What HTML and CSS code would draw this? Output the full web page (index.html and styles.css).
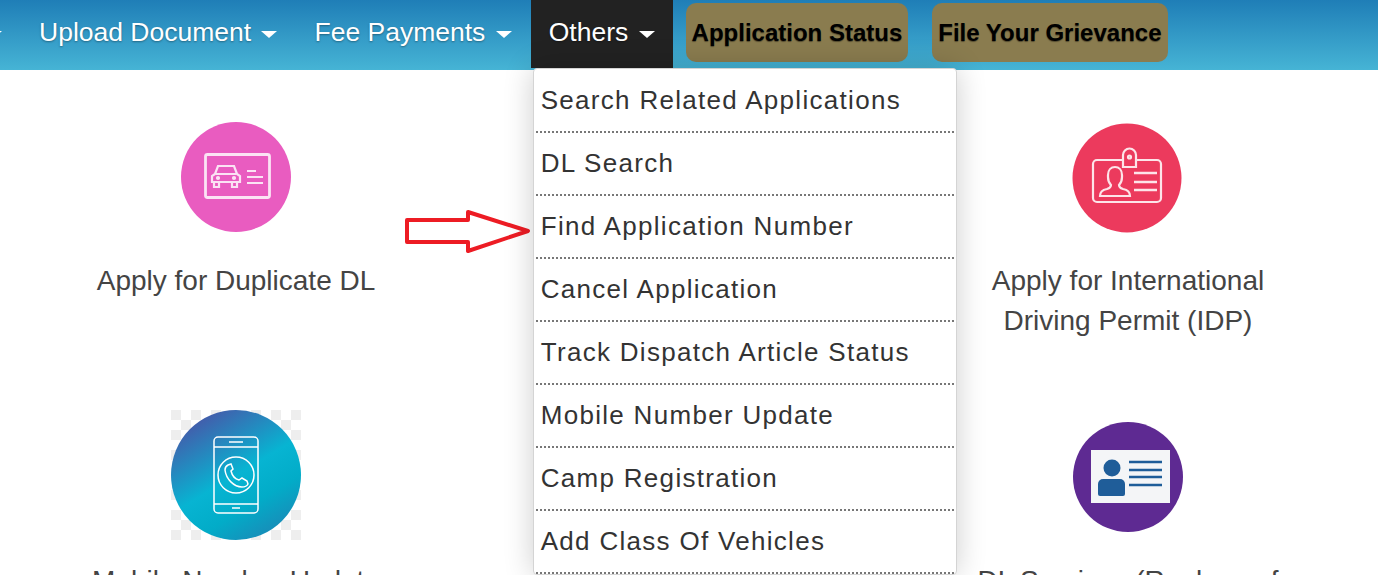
FILE: index.html
```html
<!DOCTYPE html>
<html lang="en">
<head>
    <meta charset="UTF-8">
    <meta name="viewport" content="width=device-width, initial-scale=1.0">
    <title>Online Services</title>
    <link rel="stylesheet" href="styles.css">
</head>
<body>
    <!-- Top navigation -->
    <nav class="navbar">
        <ul class="nav-list">
            <li class="nav-item nav-cut"><span class="caret"></span></li>
            <li class="nav-item">Upload Document <span class="caret"></span></li>
            <li class="nav-item">Fee Payments <span class="caret"></span></li>
            <li class="nav-item active">Others <span class="caret"></span>
                <ul class="dropdown">
                    <li>Search Related Applications</li>
                    <li>DL Search</li>
                    <li>Find Application Number</li>
                    <li>Cancel Application</li>
                    <li>Track Dispatch Article Status</li>
                    <li>Mobile Number Update</li>
                    <li>Camp Registration</li>
                    <li>Add Class Of Vehicles</li>
                </ul>
            </li>
        </ul>
        <a class="nav-btn first" href="#">Application Status</a>
        <a class="nav-btn" href="#">File Your Grievance</a>
    </nav>

    <!-- Service cards -->
    <main class="cards">
        <div class="card">
            <svg class="icon" viewBox="0 0 110 110">
                <circle cx="55" cy="55" r="55" fill="#e95cc0"/>
                <g fill="none" stroke="#fbe3f4" stroke-width="2.2">
                    <rect x="24.500" y="32.500" width="64" height="43" rx="2" stroke-width="2.8"/>
                    <path d="M31 60v-6l3-2 3-8h16l3 8 3 2v6zM33 60v5h5v-5M51 60v5h5v-5M35 52h20"/>
                    <circle cx="37" cy="56" r="1"/>
                    <circle cx="53" cy="56" r="1"/>
                    <path d="M66 49h9M66 55h16M66 61h16"/>
                </g>
            </svg>
            <p class="card-label">Apply for Duplicate DL</p>
        </div>
        <div class="card"></div>
        <div class="card">
            <svg class="icon icon-id" viewBox="0 0 110 110">
                <circle cx="55" cy="55" r="54.500" fill="#ec3a5d"/>
                <g fill="none" stroke="#fde4e9" stroke-width="2.2">
                    <path d="M51 37h-26a4 4 0 0 0-4 4v34a4 4 0 0 0 4 4h60a4 4 0 0 0 4-4v-34a4 4 0 0 0-4-4h-21"/>
                    <path d="M51 44v-12a6.500 6.500 0 0 1 13 0v12z"/>
                    <circle cx="57.500" cy="34" r="1.500"/>
                    <path d="M28 73c0-4 2-6 7-7 3-1 4-2 4-4-2-2-3-5-3-8v-2c0-5 3-8 7-8s7 3 7 8v2c0 3-1 6-3 8 0 2 1 3 4 4 5 1 7 3 7 7z"/>
                    <path d="M62 50h23M62 59h23M62 67h23" stroke-width="2.600"/>
                </g>
            </svg>
            <p class="card-label">Apply for International Driving Permit (IDP)</p>
        </div>
        <div class="card">
            <div class="icon-checker">
                <svg class="icon-phone" viewBox="0 0 130 130">
                    <defs>
                        <linearGradient id="phoneGrad" x1="0.2" y1="0" x2="0.8" y2="1">
                            <stop offset="0" stop-color="#4b51a6"/>
                            <stop offset="0.5" stop-color="#07b4d2"/>
                            <stop offset="0.72" stop-color="#02acc8"/>
                            <stop offset="1" stop-color="#1d86b5"/>
                        </linearGradient>
                    </defs>
                    <circle cx="65" cy="65" r="65" fill="url(#phoneGrad)"/>
                    <g fill="none" stroke="#fff" stroke-width="1.500">
                        <rect x="43" y="27" width="44" height="76" rx="4"/>
                        <path d="M43 37h44M43 94h44M58 32h14M61 98h8"/>
                        <circle cx="65" cy="65" r="18"/>
                        <path d="M57 55c-2 1-3 3-3 5 1 9 9 17 17 17 3 0 5-1 6-3l-1-3-5-3-3 2c-4-1-7-5-8-9l2-2-2-5z"/>
                    </g>
                </svg>
            </div>
            <p class="card-label phone-label">Mobile Number Update</p>
        </div>
        <div class="card"></div>
        <div class="card">
            <svg class="icon" viewBox="0 0 110 110">
                <circle cx="55" cy="55" r="55" fill="#5e2a92"/>
                <rect x="18" y="28" width="79" height="53" fill="#f4f5f7"/>
                <circle cx="39" cy="46" r="8.500" fill="#1f5d99"/>
                <path d="M25 72v-10a5 5 0 0 1 5-5h17a5 5 0 0 1 5 5v10a2 2 0 0 1-2 2h-23a2 2 0 0 1-2-2z" fill="#1f5d99"/>
                <path d="M56 40h33M56 48h33M56 55h33M56 63h33" stroke="#1f5d99" stroke-width="2.500"/>
            </svg>
            <p class="card-label">DL Services (Replace of DL, Renewal of DL)</p>
        </div>
    </main>

    <!-- Red pointer drawn over the page -->
    <svg class="pointer" viewBox="0 0 130 46">
        <path d="M3 11h61V3l60 19-60 20v-9H3z" fill="#fff" stroke="#ed1c24" stroke-width="4" stroke-linejoin="round"/>
    </svg>
</body>
</html>
```

FILE: styles.css
```css
html, body {
    height: 100%;
}
body {
    font-family: "Liberation Sans", Arial, sans-serif;
    margin: 0;
    padding: 0;
    background-color: #fff;
    overflow: hidden;
}
.navbar {
    display: flex;
    align-items: flex-start;
    height: 70px;
    background: linear-gradient(to bottom, #1f7eb7, #46b4d5);
}
.nav-list {
    display: flex;
    gap: 1px;
    margin: 0;
    padding: 0;
    list-style: none;
}
.nav-item {
    position: relative;
    height: 68px;
    padding: 0 18px;
    box-sizing: border-box;
    font-size: 26.500px;
    line-height: 65px;
    color: #fff;
    text-shadow: 0 1px 2px rgba(0, 0, 0, 0.35);
    white-space: nowrap;
}
.nav-item.nav-cut {
    display: flex;
    justify-content: flex-end;
    align-items: center;
    width: 20px;
    padding: 0 18px 0 0;
    overflow: hidden;
}
.nav-item.active {
    background-color: #222;
}
.caret {
    display: inline-block;
    width: 0;
    height: 0;
    margin-left: 3px;
    vertical-align: middle;
    border-top: 7px solid #fff;
    border-left: 8px solid transparent;
    border-right: 8px solid transparent;
}
.nav-cut .caret {
    flex: none;
    margin: 0;
}
.nav-btn {
    margin: 3px 24px 0 0;
    padding: 0 6px;
    height: 59px;
    line-height: 59px;
    border-radius: 10px;
    background-color: #8a7c4f;
    color: #000;
    font-size: 24px;
    font-weight: bold;
    text-decoration: none;
    text-shadow: 0 1px 1px rgba(0, 0, 0, 0.4);
    white-space: nowrap;
}
.nav-btn.first {
    margin-left: 13px;
}
.dropdown {
    position: absolute;
    top: 68px;
    left: 2px;
    width: 418px;
    margin: 0;
    padding: 1px 2px 0;
    list-style: none;
    background-color: #fff;
    border: 1px solid #d4d4d4;
    border-radius: 4px;
    box-shadow: 0 0 30px rgba(0, 0, 0, 0.2);
    color: #333;
    text-shadow: none;
    z-index: 5;
}
.dropdown li {
    height: 63px;
    box-sizing: border-box;
    padding-left: 5px;
    font-size: 26px;
    line-height: 61px;
    letter-spacing: 1.300px;
    border-bottom: 2px dotted #777;
}
.cards {
    display: grid;
    grid-template-columns: repeat(3, 446px);
    grid-auto-rows: 300px;
    padding: 52px 0 0 13px;
}
.card {
    display: flex;
    flex-direction: column;
    align-items: center;
}
.icon {
    width: 110px;
    height: 110px;
    flex: none;
}
.icon-id {
    margin: 1px 0 -1px;
    transform: translateX(-1px);
}
.icon-checker {
    flex: none;
    width: 130px;
    height: 130px;
    margin-top: -12px;
    background: repeating-conic-gradient(#eee 0 25%, #fff 0 50%) 10px 0 / 20px 20px;
}
.icon-phone {
    display: block;
    width: 130px;
    height: 130px;
}
.card-label {
    width: 320px;
    margin: 29px 0 0;
    font-size: 28px;
    line-height: 40px;
    text-align: center;
    color: #444;
}
.phone-label {
    margin-top: 21px;
}
.pointer {
    position: absolute;
    left: 404px;
    top: 209px;
    width: 130px;
    height: 46px;
}
```
